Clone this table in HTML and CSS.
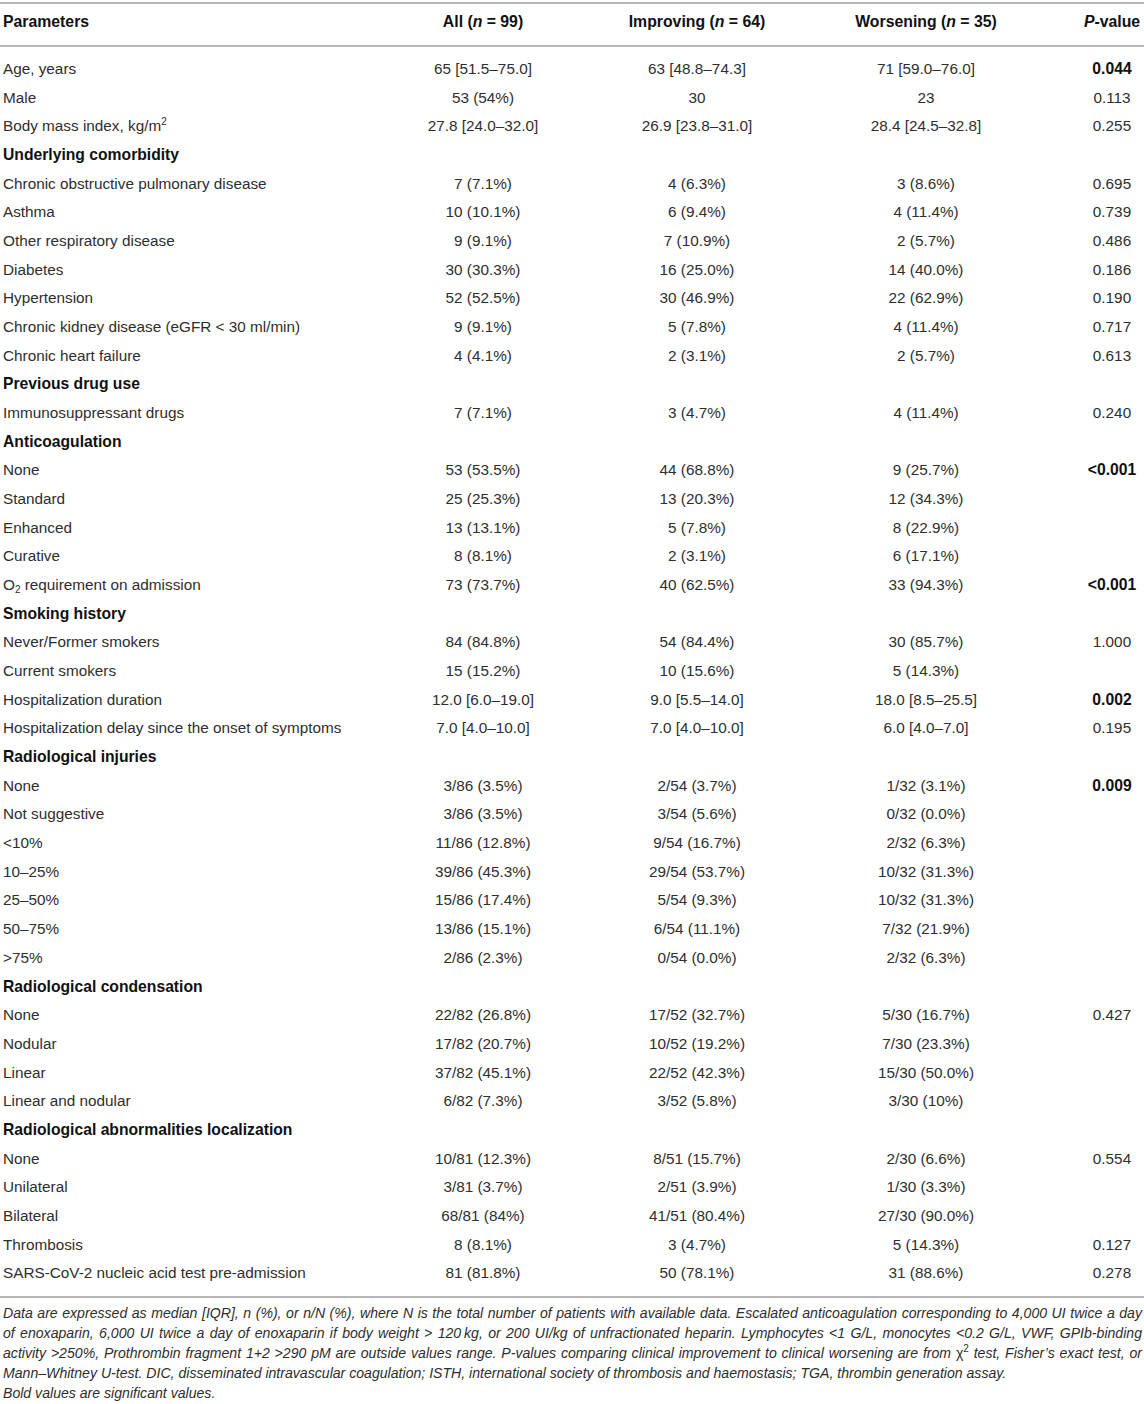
FILE: index.html
```html
<!DOCTYPE html>
<html lang="en">
<head>
    <meta charset="UTF-8">
    <meta name="viewport" content="width=device-width, initial-scale=1.0">
    <title>Patient characteristics</title>
    <link rel="stylesheet" href="styles.css">
</head>
<body>

<div class="table-wrap">
    <table class="data-table">
        <colgroup>
            <col class="col-param">
            <col class="col-all">
            <col class="col-imp">
            <col class="col-wor">
            <col class="col-p">
        </colgroup>
        <thead>
            <tr>
                <th class="param">Parameters</th>
                <th>All (<i>n</i> = 99)</th>
                <th>Improving (<i>n</i> = 64)</th>
                <th>Worsening (<i>n</i> = 35)</th>
                <th class="pval"><i>P</i>-value</th>
            </tr>
        </thead>
        <tbody>
            <tr class="first"><td class="param">Age, years</td><td>65 [51.5–75.0]</td><td>63 [48.8–74.3]</td><td>71 [59.0–76.0]</td><td class="pval sig">0.044</td></tr>
            <tr><td class="param">Male</td><td>53 (54%)</td><td>30</td><td>23</td><td class="pval">0.113</td></tr>
            <tr><td class="param">Body mass index, kg/m<sup>2</sup></td><td>27.8 [24.0–32.0]</td><td>26.9 [23.8–31.0]</td><td>28.4 [24.5–32.8]</td><td class="pval">0.255</td></tr>
            <tr class="section"><td class="param" colspan="5">Underlying comorbidity</td></tr>
            <tr><td class="param">Chronic obstructive pulmonary disease</td><td>7 (7.1%)</td><td>4 (6.3%)</td><td>3 (8.6%)</td><td class="pval">0.695</td></tr>
            <tr><td class="param">Asthma</td><td>10 (10.1%)</td><td>6 (9.4%)</td><td>4 (11.4%)</td><td class="pval">0.739</td></tr>
            <tr><td class="param">Other respiratory disease</td><td>9 (9.1%)</td><td>7 (10.9%)</td><td>2 (5.7%)</td><td class="pval">0.486</td></tr>
            <tr><td class="param">Diabetes</td><td>30 (30.3%)</td><td>16 (25.0%)</td><td>14 (40.0%)</td><td class="pval">0.186</td></tr>
            <tr><td class="param">Hypertension</td><td>52 (52.5%)</td><td>30 (46.9%)</td><td>22 (62.9%)</td><td class="pval">0.190</td></tr>
            <tr><td class="param">Chronic kidney disease (eGFR &lt; 30 ml/min)</td><td>9 (9.1%)</td><td>5 (7.8%)</td><td>4 (11.4%)</td><td class="pval">0.717</td></tr>
            <tr><td class="param">Chronic heart failure</td><td>4 (4.1%)</td><td>2 (3.1%)</td><td>2 (5.7%)</td><td class="pval">0.613</td></tr>
            <tr class="section"><td class="param" colspan="5">Previous drug use</td></tr>
            <tr><td class="param">Immunosuppressant drugs</td><td>7 (7.1%)</td><td>3 (4.7%)</td><td>4 (11.4%)</td><td class="pval">0.240</td></tr>
            <tr class="section"><td class="param" colspan="5">Anticoagulation</td></tr>
            <tr><td class="param">None</td><td>53 (53.5%)</td><td>44 (68.8%)</td><td>9 (25.7%)</td><td class="pval sig">&lt;0.001</td></tr>
            <tr><td class="param">Standard</td><td>25 (25.3%)</td><td>13 (20.3%)</td><td>12 (34.3%)</td><td class="pval"></td></tr>
            <tr><td class="param">Enhanced</td><td>13 (13.1%)</td><td>5 (7.8%)</td><td>8 (22.9%)</td><td class="pval"></td></tr>
            <tr><td class="param">Curative</td><td>8 (8.1%)</td><td>2 (3.1%)</td><td>6 (17.1%)</td><td class="pval"></td></tr>
            <tr><td class="param">O<sub>2</sub> requirement on admission</td><td>73 (73.7%)</td><td>40 (62.5%)</td><td>33 (94.3%)</td><td class="pval sig">&lt;0.001</td></tr>
            <tr class="section"><td class="param" colspan="5">Smoking history</td></tr>
            <tr><td class="param">Never/Former smokers</td><td>84 (84.8%)</td><td>54 (84.4%)</td><td>30 (85.7%)</td><td class="pval">1.000</td></tr>
            <tr><td class="param">Current smokers</td><td>15 (15.2%)</td><td>10 (15.6%)</td><td>5 (14.3%)</td><td class="pval"></td></tr>
            <tr><td class="param">Hospitalization duration</td><td>12.0 [6.0–19.0]</td><td>9.0 [5.5–14.0]</td><td>18.0 [8.5–25.5]</td><td class="pval sig">0.002</td></tr>
            <tr><td class="param">Hospitalization delay since the onset of symptoms</td><td>7.0 [4.0–10.0]</td><td>7.0 [4.0–10.0]</td><td>6.0 [4.0–7.0]</td><td class="pval">0.195</td></tr>
            <tr class="section"><td class="param" colspan="5">Radiological injuries</td></tr>
            <tr><td class="param">None</td><td>3/86 (3.5%)</td><td>2/54 (3.7%)</td><td>1/32 (3.1%)</td><td class="pval sig">0.009</td></tr>
            <tr><td class="param">Not suggestive</td><td>3/86 (3.5%)</td><td>3/54 (5.6%)</td><td>0/32 (0.0%)</td><td class="pval"></td></tr>
            <tr><td class="param">&lt;10%</td><td>11/86 (12.8%)</td><td>9/54 (16.7%)</td><td>2/32 (6.3%)</td><td class="pval"></td></tr>
            <tr><td class="param">10–25%</td><td>39/86 (45.3%)</td><td>29/54 (53.7%)</td><td>10/32 (31.3%)</td><td class="pval"></td></tr>
            <tr><td class="param">25–50%</td><td>15/86 (17.4%)</td><td>5/54 (9.3%)</td><td>10/32 (31.3%)</td><td class="pval"></td></tr>
            <tr><td class="param">50–75%</td><td>13/86 (15.1%)</td><td>6/54 (11.1%)</td><td>7/32 (21.9%)</td><td class="pval"></td></tr>
            <tr><td class="param">&gt;75%</td><td>2/86 (2.3%)</td><td>0/54 (0.0%)</td><td>2/32 (6.3%)</td><td class="pval"></td></tr>
            <tr class="section"><td class="param" colspan="5">Radiological condensation</td></tr>
            <tr><td class="param">None</td><td>22/82 (26.8%)</td><td>17/52 (32.7%)</td><td>5/30 (16.7%)</td><td class="pval">0.427</td></tr>
            <tr><td class="param">Nodular</td><td>17/82 (20.7%)</td><td>10/52 (19.2%)</td><td>7/30 (23.3%)</td><td class="pval"></td></tr>
            <tr><td class="param">Linear</td><td>37/82 (45.1%)</td><td>22/52 (42.3%)</td><td>15/30 (50.0%)</td><td class="pval"></td></tr>
            <tr><td class="param">Linear and nodular</td><td>6/82 (7.3%)</td><td>3/52 (5.8%)</td><td>3/30 (10%)</td><td class="pval"></td></tr>
            <tr class="section"><td class="param" colspan="5">Radiological abnormalities localization</td></tr>
            <tr><td class="param">None</td><td>10/81 (12.3%)</td><td>8/51 (15.7%)</td><td>2/30 (6.6%)</td><td class="pval">0.554</td></tr>
            <tr><td class="param">Unilateral</td><td>3/81 (3.7%)</td><td>2/51 (3.9%)</td><td>1/30 (3.3%)</td><td class="pval"></td></tr>
            <tr><td class="param">Bilateral</td><td>68/81 (84%)</td><td>41/51 (80.4%)</td><td>27/30 (90.0%)</td><td class="pval"></td></tr>
            <tr><td class="param">Thrombosis</td><td>8 (8.1%)</td><td>3 (4.7%)</td><td>5 (14.3%)</td><td class="pval">0.127</td></tr>
            <tr class="last"><td class="param">SARS-CoV-2 nucleic acid test pre-admission</td><td>81 (81.8%)</td><td>50 (78.1%)</td><td>31 (88.6%)</td><td class="pval">0.278</td></tr>
        </tbody>
    </table>

    <p class="footnote">
        <span class="line full">Data are expressed as median [IQR], n (%), or n/N (%), where N is the total number of patients with available data. Escalated anticoagulation corresponding to 4,000 UI twice a day</span>
        <span class="line full">of enoxaparin, 6,000 UI twice a day of enoxaparin if body weight &gt; 120&#8201;kg, or 200 UI/kg of unfractionated heparin. Lymphocytes &lt;1 G/L, monocytes &lt;0.2 G/L, VWF, GPIb-binding</span>
        <span class="line full">activity &gt;250%, Prothrombin fragment 1+2 &gt;290 pM are outside values range. P-values comparing clinical improvement to clinical worsening are from <span class="upright">χ<sup>2</sup></span> test, Fisher’s exact test, or</span>
        <span class="line">Mann–Whitney U-test. DIC, disseminated intravascular coagulation; ISTH, international society of thrombosis and haemostasis; TGA, thrombin generation assay.</span>
        <span class="line">Bold values are significant values.</span>
    </p>
</div>

</body>
</html>
```

FILE: styles.css
```css
body {
    font-family: "Liberation Sans", Arial, sans-serif;
    background-color: #ffffff;
    color: #2e2e2e;
    margin: 0;
}
.table-wrap {
    padding-top: 2px;
}
.data-table {
    width: 1144px;
    border-collapse: collapse;
    table-layout: fixed;
    font-size: 15.3px;
    border-top: 2px solid #b8b8b8;
    border-bottom: 2px solid #b8b8b8;
}
.col-param { width: 383px; }
.col-all { width: 200px; }
.col-imp { width: 228px; }
.col-wor { width: 230px; }
.col-p { width: 103px; }

th, td {
    text-align: center;
    white-space: nowrap;
    padding: 0;
}
th {
    font-weight: bold;
    font-size: 15.8px;
    color: #111;
    line-height: 17px;
    padding-top: 9px;
    padding-bottom: 15px;
    border-bottom: 2px solid #b8b8b8;
}
th i {
    font-style: italic;
}
td {
    line-height: 28.67px;
}
.param {
    text-align: left;
    padding-left: 3px;
}
.pval {
    padding-left: 39px;
}
.sig,
.section td {
    font-weight: bold;
    font-size: 15.7px;
    color: #111;
}
.first td {
    padding-top: 8px;
}
.last td {
    padding-bottom: 8px;
}
sup, sub {
    font-size: 10px;
    line-height: 0;
}
sup {
    vertical-align: 6px;
}
sub {
    vertical-align: -3px;
}
.footnote {
    margin: 5px 0 0;
    padding: 0 2px 0 3px;
    font-size: 14.1px;
    font-style: italic;
    line-height: 20px;
    color: #2e2e2e;
}
.footnote .line {
    display: block;
    white-space: nowrap;
}
.footnote .full {
    white-space: normal;
    text-align: justify;
    text-align-last: justify;
}
.footnote sup {
    font-size: 10px;
}
.upright {
    font-style: normal;
}
```
